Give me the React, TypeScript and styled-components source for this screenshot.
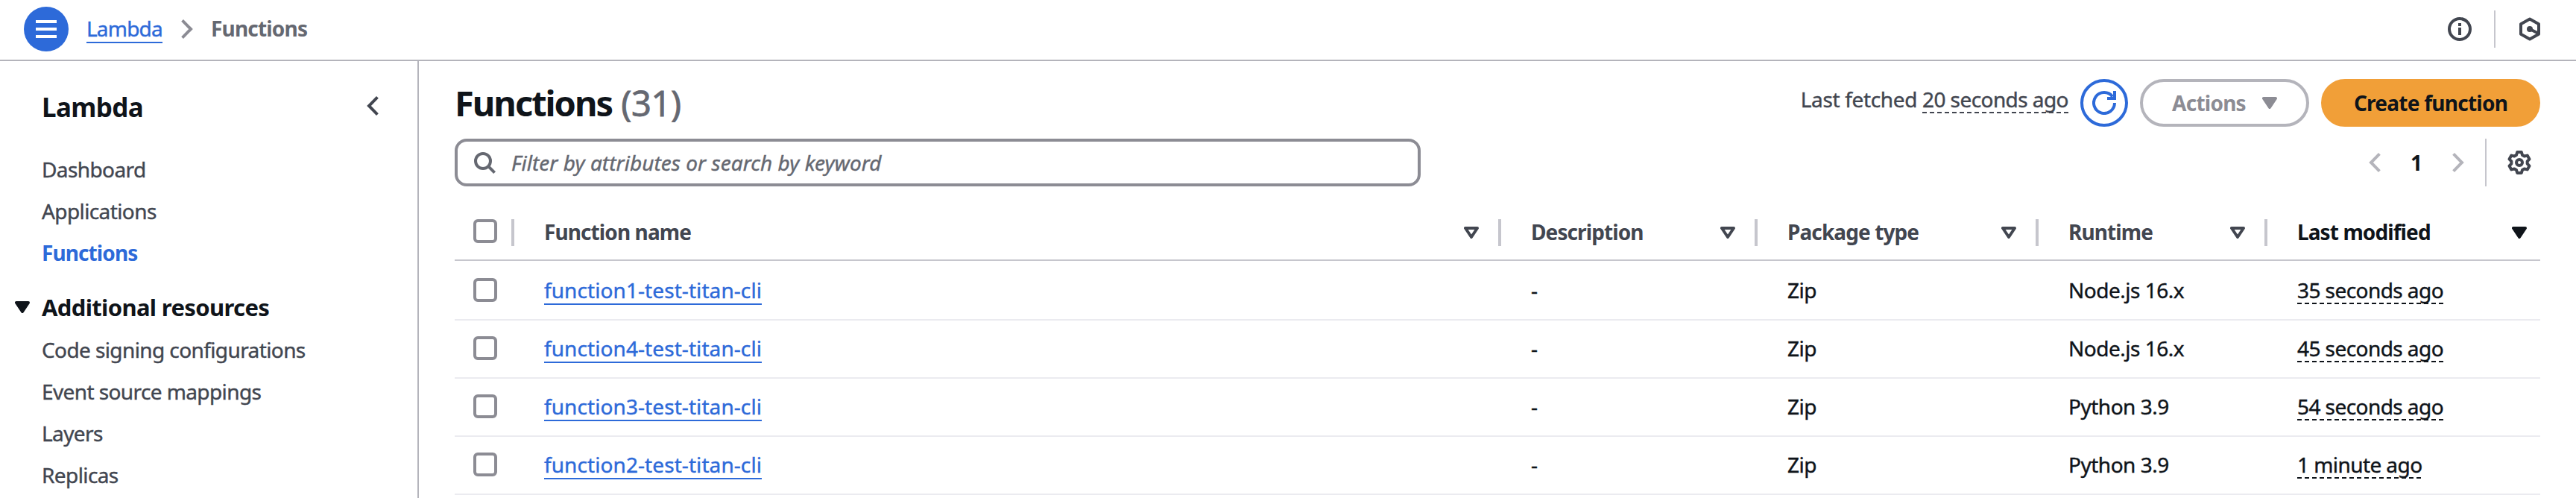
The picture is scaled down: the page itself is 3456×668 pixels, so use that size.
import React, { FunctionComponent } from 'react';
import styled, { createGlobalStyle, css } from 'styled-components';

const INK = '#0f141a';
const SLATE = '#424650';
const GREY = '#656871';
const MID_GREY = '#8c8c94';
const DISABLED = '#b4b4bb';
const DIVIDER = '#c6c6cd';
const ROW_LINE = '#ebebf0';
const BLUE = '#2d6ad9';
const ORANGE = '#f19f38';
const WHITE = '#fff';

const GlobalStyle = createGlobalStyle`
  * {
    box-sizing: border-box;
  }

  body {
    margin: 0;
    overflow: hidden;
    background: ${WHITE};
    color: ${INK};
    font-family: 'Noto Sans', 'Open Sans', sans-serif;
    font-size: 28px;
    line-height: 40px;
    -webkit-text-stroke: 0.4px;
  }

  svg {
    display: block;
    flex: none;
  }
`;

const Page = styled.div`
  display: flex;
  flex-direction: column;
  height: 668px;
  overflow: hidden;
`;

/* Top bar */

const TopBar = styled.header`
  display: flex;
  align-items: flex-start;
  height: 82px;
  padding: 9px 46px 0 32px;
  border-bottom: 2px solid ${DISABLED};
`;

const MenuButton = styled.button`
  display: flex;
  align-items: center;
  justify-content: center;
  width: 60px;
  height: 60px;
  padding: 0;
  border: 0;
  border-radius: 50%;
  background: ${BLUE};
  color: ${WHITE};
`;

const Breadcrumbs = styled.nav`
  display: flex;
  align-items: flex-start;
  margin: 9px 0 0 24px;
`;

const CrumbLink = styled.a`
  height: 40px;
  border-bottom: 2px solid ${BLUE};
  color: ${BLUE};
  letter-spacing: -0.8px;
`;

const CrumbSeparator = styled.span`
  margin: 7px 24px 0 25px;
  color: ${MID_GREY};
`;

const CrumbCurrent = styled.span`
  color: ${GREY};
  font-weight: 700;
  letter-spacing: -0.8px;
  -webkit-text-stroke: 0;
`;

const TopTools = styled.div`
  display: flex;
  align-items: center;
  gap: 30px;
  height: 50px;
  margin: 5px 0 0 auto;
  color: ${SLATE};
`;

const Separator = styled.span<{ $height: number }>`
  width: 2px;
  height: ${({ $height }) => $height}px;
  background: ${DIVIDER};
`;

const Body = styled.div`
  display: flex;
  flex: 1;
  min-height: 0;
`;

/* Side navigation */

const SideNav = styled.aside`
  flex: none;
  width: 562px;
  padding: 40px 52px 0 56px;
  border-right: 2px solid ${DISABLED};
`;

const SideHeader = styled.div`
  display: flex;
  justify-content: space-between;
  margin-bottom: 41px;
  color: ${SLATE};

  svg {
    margin-top: 6px;
  }
`;

const SideTitle = styled.h2`
  margin: 0;
  color: ${INK};
  font-size: 35px;
  line-height: 44px;
  letter-spacing: -0.65px;
  -webkit-text-stroke: 0;
`;

const NavList = styled.ul`
  display: flex;
  flex-direction: column;
  gap: 16px;
  margin: 0;
  padding: 0;
  list-style: none;
`;

const NavItem = styled.li<{ $active?: boolean }>`
  color: ${SLATE};
  letter-spacing: -0.6px;
  ${({ $active }) =>
    $active &&
    css`
      color: ${BLUE};
      font-weight: 700;
      letter-spacing: -0.9px;
      -webkit-text-stroke: 0;
    `};
`;

const SectionTitle = styled.h3`
  display: flex;
  align-items: center;
  gap: 16px;
  margin: 33px 0 17px -36px;
  font-size: 31px;
  line-height: 40px;
  letter-spacing: -0.65px;
  -webkit-text-stroke: 0;
`;

/* Main content */

const Main = styled.main`
  flex: 1;
  padding: 24px 48px 0 48px;
`;

const TitleRow = styled.div`
  display: flex;
  align-items: flex-start;
  height: 64px;
`;

const Title = styled.h1`
  margin: 0;
  font-size: 47px;
  line-height: 64px;
  letter-spacing: -2px;
  -webkit-text-stroke: 0;
`;

const Counter = styled.span`
  margin-left: 2px;
  color: ${GREY};
  font-weight: 400;
  letter-spacing: -0.4px;
  -webkit-text-stroke: 0.8px;
`;

const LastFetched = styled.div`
  margin: 7px 16px 0 auto;
  color: ${SLATE};
  letter-spacing: -0.35px;
`;

const Timestamp = styled.span`
  display: inline-block;
  height: 39px;
  background: repeating-linear-gradient(90deg, currentColor 0 6px, transparent 6px 10px) 0 100% / 100% 2px no-repeat;
  letter-spacing: -0.57px;
`;

const Button = styled.button<{ $width: number; $variant?: 'normal' | 'disabled' | 'primary' }>`
  display: flex;
  align-items: center;
  justify-content: center;
  gap: 22px;
  width: ${({ $width }) => $width}px;
  height: 64px;
  padding: 0;
  border: 4px solid ${BLUE};
  border-radius: 32px;
  background: ${WHITE};
  color: ${BLUE};
  font: inherit;
  font-weight: 700;
  letter-spacing: -0.75px;
  -webkit-text-stroke: 0;

  & + & {
    margin-left: 16px;
  }

  ${({ $variant }) =>
    $variant === 'disabled' &&
    css`
      border-color: ${DISABLED};
      color: ${MID_GREY};
    `};

  ${({ $variant }) =>
    $variant === 'primary' &&
    css`
      border-color: ${ORANGE};
      background: ${ORANGE};
      color: ${INK};
    `};
`;

const FilterRow = styled.div`
  display: flex;
  align-items: center;
  justify-content: space-between;
  margin-top: 16px;
  padding-right: 12px;
`;

const SearchBox = styled.div`
  display: flex;
  align-items: center;
  gap: 20px;
  width: 1296px;
  height: 64px;
  padding: 0 20px;
  border: 4px solid ${MID_GREY};
  border-radius: 16px;
  color: ${GREY};
`;

const SearchInput = styled.input`
  flex: 1;
  padding: 0;
  border: 0;
  outline: 0;
  background: none;
  font: inherit;

  &::placeholder {
    color: ${GREY};
    font-style: italic;
    letter-spacing: 0.04px;
    opacity: 1;
  }
`;

const Pagination = styled.div`
  display: flex;
  align-items: center;
  color: ${DISABLED};
`;

const PageNumber = styled.span`
  margin: 0 40px;
  color: ${INK};
  font-weight: 700;
  -webkit-text-stroke: 0;
`;

const Preferences = styled.div`
  display: flex;
  align-items: center;
  gap: 28px;
  margin-left: 28px;
  color: ${SLATE};
`;

/* Table */

const gridColumns = css`
  display: grid;
  grid-template-columns: 80px 1324px 344px 377px 307px 366px;
`;

const HeaderRow = styled.div`
  ${gridColumns};
  height: 100px;
  padding-top: 41px;
  border-bottom: 2px solid ${DIVIDER};
`;

const HeaderCell = styled.div<{ $sorted?: boolean }>`
  display: flex;
  align-items: flex-start;
  padding-left: 40px;
  color: ${({ $sorted }) => ($sorted ? INK : SLATE)};
  font-weight: 700;
  letter-spacing: -0.9px;
  -webkit-text-stroke: 0;

  svg {
    margin: 13px ${({ $sorted }) => ($sorted ? 18 : 26)}px 0 auto;
  }
`;

const ColumnDivider = styled.span`
  width: 4px;
  height: 36px;
  margin-top: 3px;
  background: ${DIVIDER};
`;

const SelectHeader = styled.div`
  display: flex;
  justify-content: space-between;
  padding-left: 25px;
`;

const SelectCell = styled.div`
  padding: 1px 0 0 25px;
`;

const Checkbox = styled.span`
  display: block;
  width: 32px;
  height: 32px;
  margin-top: 3px;
  border: 4px solid ${MID_GREY};
  border-radius: 6px;
`;

const TableBody = styled.div`
  padding-top: 2px;
`;

const Row = styled.div`
  ${gridColumns};
  height: 78px;
  padding-top: 17px;
  border-bottom: 2px solid ${ROW_LINE};
`;

const Cell = styled.div`
  padding-left: 40px;
  letter-spacing: -0.5px;
`;

const FunctionLink = styled.a`
  display: inline-block;
  height: 40px;
  border-bottom: 2px solid ${BLUE};
  color: ${BLUE};
  letter-spacing: 0.08px;
`;

/* Icons */

type IconProps = {
  direction?: 'left' | 'right';
  filled?: boolean;
};

const Chevron: FunctionComponent<IconProps> = ({ direction = 'right' }) => (
  <svg width="16" height="28" viewBox="0 0 16 28" fill="none" stroke="currentColor" strokeWidth="4">
    <path d={direction === 'left' ? 'M14.4 2.4 3 14l11.4 11.6' : 'M1.6 2.4 13 14 1.6 25.6'} />
  </svg>
);

const Caret: FunctionComponent<IconProps> = ({ filled = false }) => (
  <svg width="20" height="16" viewBox="0 0 20 16" fill={filled ? 'currentColor' : 'none'} stroke="currentColor" strokeWidth="4" strokeLinejoin="round">
    <path d="M2 2h16l-8 12z" />
  </svg>
);

const Icon: FunctionComponent<{ children: React.ReactNode }> = ({ children }) => (
  <svg width="32" height="32" viewBox="0 0 16 16" fill="none" stroke="currentColor" strokeWidth="2">
    {children}
  </svg>
);

const MenuIcon = () => (
  <svg width="28" height="24" viewBox="0 0 28 24" stroke="currentColor" strokeWidth="4">
    <path d="M0 2h28M0 12h28M0 22h28" />
  </svg>
);

const InfoIcon = () => (
  <Icon>
    <circle cx="8" cy="8" r="7" />
    <path d="M8 4v2M8 7v5" />
  </Icon>
);

const AssistantIcon = () => (
  <Icon>
    <path d="m8 1.2 6 3.4v6.8l-6 3.4-6-3.4V4.6zM8 8l6 3" strokeLinejoin="round" />
    <circle cx="8" cy="8" r="2" fill="currentColor" stroke="none" />
  </Icon>
);

const RefreshIcon = () => (
  <Icon>
    <path d="M15 8a7 7 0 1 1-1.4-4.2M15 0v5h-5" />
  </Icon>
);

const SearchIcon = () => (
  <Icon>
    <circle cx="7" cy="7" r="5" />
    <path d="m10.6 10.6 4.2 4.2" />
  </Icon>
);

const SettingsIcon = () => (
  <Icon>
    <path
      strokeLinejoin="round"
      d="M6 3 6.6 1h2.8L10 3l1.33.77 2.03-.48 1.4 2.42-1.43 1.52v1.54l1.43 1.52-1.4 2.42-2.03-.48L10 13l-.6 2H6.6L6 13l-1.33-.77-2.03.48-1.4-2.42 1.43-1.52V7.23L1.24 5.71l1.4-2.42 2.03.48z"
    />
    <circle cx="8" cy="8" r="2" />
  </Icon>
);

const columns = ['Function name', 'Description', 'Package type', 'Runtime'];

const functions = [
  { name: 'function1-test-titan-cli', runtime: 'Node.js 16.x', modified: '35 seconds ago' },
  { name: 'function4-test-titan-cli', runtime: 'Node.js 16.x', modified: '45 seconds ago' },
  { name: 'function3-test-titan-cli', runtime: 'Python 3.9', modified: '54 seconds ago' },
  { name: 'function2-test-titan-cli', runtime: 'Python 3.9', modified: '1 minute ago' },
];

const FunctionsTable = () => (
  <>
    <HeaderRow>
      <SelectHeader>
        <Checkbox />
        <ColumnDivider />
      </SelectHeader>
      {columns.map((column) => (
        <HeaderCell key={column}>
          {column}
          <Caret />
          <ColumnDivider />
        </HeaderCell>
      ))}
      <HeaderCell $sorted>
        Last modified
        <Caret filled />
      </HeaderCell>
    </HeaderRow>
    <TableBody>
      {functions.map(({ name, runtime, modified }) => (
        <Row key={name}>
          <SelectCell>
            <Checkbox />
          </SelectCell>
          <Cell>
            <FunctionLink>{name}</FunctionLink>
          </Cell>
          <Cell>-</Cell>
          <Cell>Zip</Cell>
          <Cell>{runtime}</Cell>
          <Cell>
            <Timestamp>{modified}</Timestamp>
          </Cell>
        </Row>
      ))}
    </TableBody>
  </>
);

const App: FunctionComponent = () => (
  <Page>
    <GlobalStyle />
    <TopBar>
      <MenuButton aria-label="Open navigation">
        <MenuIcon />
      </MenuButton>
      <Breadcrumbs>
        <CrumbLink>Lambda</CrumbLink>
        <CrumbSeparator>
          <Chevron />
        </CrumbSeparator>
        <CrumbCurrent>Functions</CrumbCurrent>
      </Breadcrumbs>
      <TopTools>
        <InfoIcon />
        <Separator $height={50} />
        <AssistantIcon />
      </TopTools>
    </TopBar>
    <Body>
      <SideNav>
        <SideHeader>
          <SideTitle>Lambda</SideTitle>
          <Chevron direction="left" />
        </SideHeader>
        <NavList>
          <NavItem>Dashboard</NavItem>
          <NavItem>Applications</NavItem>
          <NavItem $active>Functions</NavItem>
        </NavList>
        <SectionTitle>
          <Caret filled />
          Additional resources
        </SectionTitle>
        <NavList>
          <NavItem>Code signing configurations</NavItem>
          <NavItem>Event source mappings</NavItem>
          <NavItem>Layers</NavItem>
          <NavItem>Replicas</NavItem>
        </NavList>
      </SideNav>
      <Main>
        <TitleRow>
          <Title>
            Functions <Counter>(31)</Counter>
          </Title>
          <LastFetched>
            Last fetched <Timestamp>20 seconds ago</Timestamp>
          </LastFetched>
          <Button $width={64} aria-label="Refresh">
            <RefreshIcon />
          </Button>
          <Button $width={227} $variant="disabled">
            Actions
            <Caret filled />
          </Button>
          <Button $width={294} $variant="primary">
            Create function
          </Button>
        </TitleRow>
        <FilterRow>
          <SearchBox>
            <SearchIcon />
            <SearchInput placeholder="Filter by attributes or search by keyword" />
          </SearchBox>
          <Pagination>
            <Chevron direction="left" />
            <PageNumber>1</PageNumber>
            <Chevron />
            <Preferences>
              <Separator $height={64} />
              <SettingsIcon />
            </Preferences>
          </Pagination>
        </FilterRow>
        <FunctionsTable />
      </Main>
    </Body>
  </Page>
);

export default App;
